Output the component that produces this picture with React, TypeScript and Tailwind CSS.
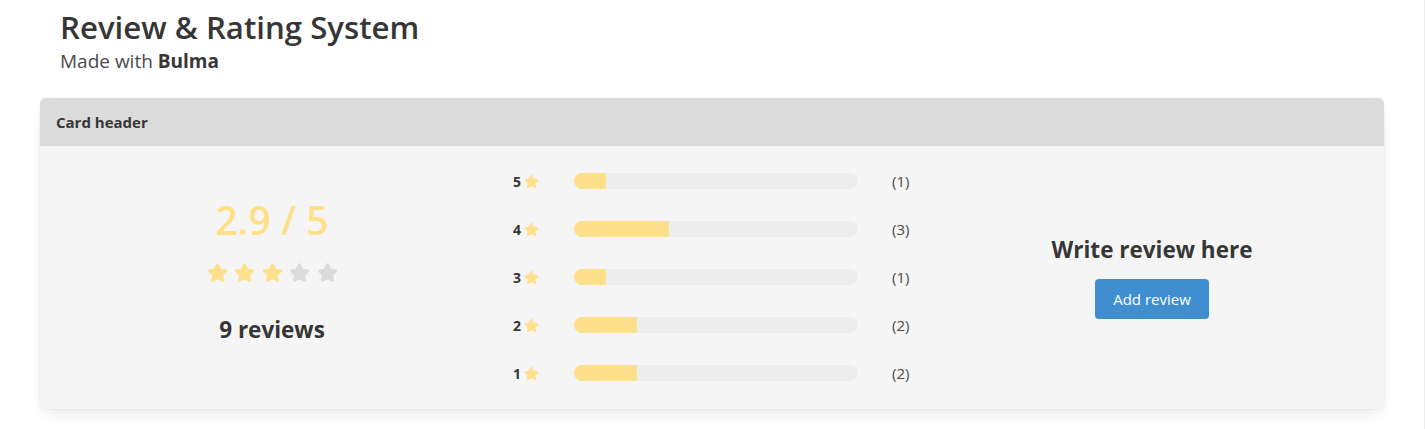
const counts = [
  { stars: 5, count: 1 },
  { stars: 4, count: 3 },
  { stars: 3, count: 1 },
  { stars: 2, count: 2 },
  { stars: 1, count: 2 },
];

const total = 9;

function Star({ size, className }: { size: number; className: string }) {
  return (
    <svg
      width={size}
      height={size}
      viewBox="0 0 576 512"
      className={className}
      fill="currentColor"
    >
      <path d="M259.3 17.8L194 150.2 47.9 171.5c-26.2 3.8-36.7 36.1-17.7 54.6l105.7 103-25 145.5c-4.5 26.3 23.2 46 46.4 33.7L288 439.6l130.7 68.7c23.2 12.2 50.9-7.4 46.4-33.7l-25-145.5 105.7-103c19-18.5 8.5-50.8-17.7-54.6L382 150.2 316.7 17.8c-11.7-23.6-45.6-23.9-57.4 0z" />
    </svg>
  );
}

export default function App() {
  return (
    <div className="min-h-screen border-r border-[#ededed] bg-white font-['Open_Sans',sans-serif] text-[#4a4a4a]">
      <div className="mx-auto w-[1344px] pt-[7px]">
        <div className="pl-5">
          <h1 className="text-[31.2px] font-semibold leading-[40px] text-[#363636]">
            Review &amp; Rating System
          </h1>
          <p className="text-[19px] leading-[28px] text-[#4a4a4a]">
            Made with <strong className="font-bold text-[#363636]">Bulma</strong>
          </p>
        </div>

        <div className="mt-[23px] overflow-hidden rounded-md bg-[#f5f5f5] shadow-[0_8px_16px_-4px_rgba(10,10,10,0.1),0_0_0_1px_rgba(10,10,10,0.02)]">
          <div className="flex h-12 items-center bg-[#dbdbdb] px-4 text-[15px] font-bold text-[#363636]">
            Card header
          </div>

          <div className="grid grid-cols-3 px-3 pt-[11px] pb-[12px]">
            <div className="flex flex-col items-center justify-center px-3 pb-[12px]">
              <div className="text-[39px] font-semibold leading-[48px] text-[#ffe08a]">
                2.9 / 5
              </div>
              <div className="mt-[18px] flex gap-[6.5px]">
                {[1, 2, 3, 4, 5].map((i) => (
                  <Star
                    key={i}
                    size={21}
                    className={i <= 3 ? "text-[#ffe08a]" : "text-[#dbdbdb]"}
                  />
                ))}
              </div>
              <div className="mt-[31px] text-[22.5px] font-bold leading-[32px] text-[#363636]">
                9 reviews
              </div>
            </div>

            <div className="flex flex-col px-3">
              {counts.map((row) => (
                <div key={row.stars} className="flex h-12 items-center">
                  <div className="flex w-[70px] items-center gap-[3px] pl-[9px]">
                    <span className="text-[14px] font-bold text-[#363636]">
                      {row.stars}
                    </span>
                    <Star size={15} className="text-[#ffe08a]" />
                  </div>
                  <div className="h-4 w-[284px] overflow-hidden rounded-full bg-[#ededed]">
                    <div
                      className="h-full bg-[#ffe08a]"
                      style={{ width: `${(row.count / total) * 100}%` }}
                    />
                  </div>
                  <span className="ml-[34px] text-[15px] text-[#4a4a4a]">
                    ({row.count})
                  </span>
                </div>
              ))}
            </div>

            <div className="flex flex-col items-center justify-center px-3">
              <h3 className="text-[22.5px] font-bold leading-[30px] text-[#363636]">
                Write review here
              </h3>
              <button className="mt-[14px] h-10 rounded-[4px] bg-[#3e8ed0] px-[18px] text-[15px] text-white">
                Add review
              </button>
            </div>
          </div>
        </div>
      </div>
    </div>
  );
}
